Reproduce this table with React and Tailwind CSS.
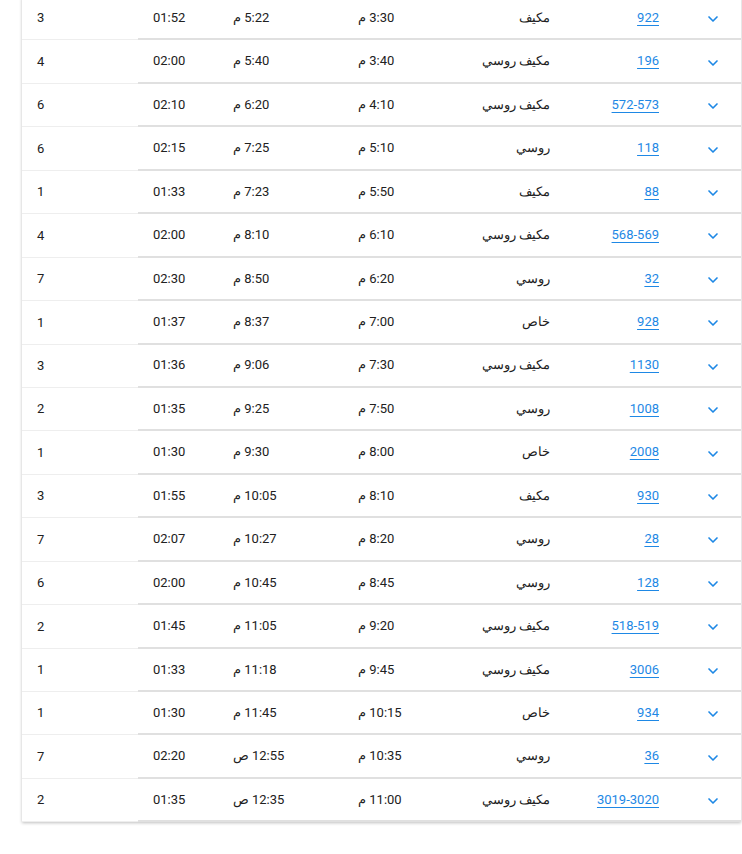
import React from 'react';
import { ChevronDown } from 'lucide-react';

const trips = [
  [3, '01:52', '5:22 م', '3:30 م', 'مكيف', '922'],
  [4, '02:00', '5:40 م', '3:40 م', 'مكيف روسي', '196'],
  [6, '02:10', '6:20 م', '4:10 م', 'مكيف روسي', '572-573'],
  [6, '02:15', '7:25 م', '5:10 م', 'روسي', '118'],
  [1, '01:33', '7:23 م', '5:50 م', 'مكيف', '88'],
  [4, '02:00', '8:10 م', '6:10 م', 'مكيف روسي', '568-569'],
  [7, '02:30', '8:50 م', '6:20 م', 'روسي', '32'],
  [1, '01:37', '8:37 م', '7:00 م', 'خاص', '928'],
  [3, '01:36', '9:06 م', '7:30 م', 'مكيف روسي', '1130'],
  [2, '01:35', '9:25 م', '7:50 م', 'روسي', '1008'],
  [1, '01:30', '9:30 م', '8:00 م', 'خاص', '2008'],
  [3, '01:55', '10:05 م', '8:10 م', 'مكيف', '930'],
  [7, '02:07', '10:27 م', '8:20 م', 'روسي', '28'],
  [6, '02:00', '10:45 م', '8:45 م', 'روسي', '128'],
  [2, '01:45', '11:05 م', '9:20 م', 'مكيف روسي', '518-519'],
  [1, '01:33', '11:18 م', '9:45 م', 'مكيف روسي', '3006'],
  [1, '01:30', '11:45 م', '10:15 م', 'خاص', '934'],
  [7, '02:20', '12:55 ص', '10:35 م', 'روسي', '36'],
  [2, '01:35', '12:35 ص', '11:00 م', 'مكيف روسي', '3019-3020'],
];

const cell = 'flex items-center border-b-2 border-[#e0e0e0]';

const TripRow = ({ trip }) => {
  const [count, duration, arrival, departure, type, number] = trip;
  return (
    <div className="grid grid-cols-[116px_80px_125px_110px_112px_109px_67px] h-[43.44px]">
      <div className="flex items-center border-b border-[#eeeeee] pl-[15px]">{count}</div>
      <div className={`${cell} pl-[15px]`}>{duration}</div>
      <div className={`${cell} pl-[15px]`}>
        <span dir="rtl">{arrival}</span>
      </div>
      <div className={`${cell} pl-[15px]`}>
        <span dir="rtl">{departure}</span>
      </div>
      <div className={`${cell} justify-end pr-[15px]`}>
        <span dir="rtl" className="font-light">{type}</span>
      </div>
      <div className={`${cell} justify-end pr-[15px]`}>
        <a href="#" className="text-[#1e88e5] underline underline-offset-[3px] decoration-[#1e88e5]">
          {number}
        </a>
      </div>
      <div className={`${cell} pl-[31px] pt-[3px]`}>
        <ChevronDown size={16} strokeWidth={2.5} className="text-[#1e88e5]" />
      </div>
    </div>
  );
};

export default function App() {
  return (
    <div className="min-h-[854px] bg-white font-['Roboto','DejaVu_Sans',sans-serif] text-[13px] text-[#212121]">
      <div className="-mt-[3px] ml-[22px] w-[719px] bg-white shadow-[0_1px_3px_rgba(0,0,0,0.25)]">
        {trips.map((trip, i) => (
          <TripRow key={i} trip={trip} />
        ))}
      </div>
    </div>
  );
}
